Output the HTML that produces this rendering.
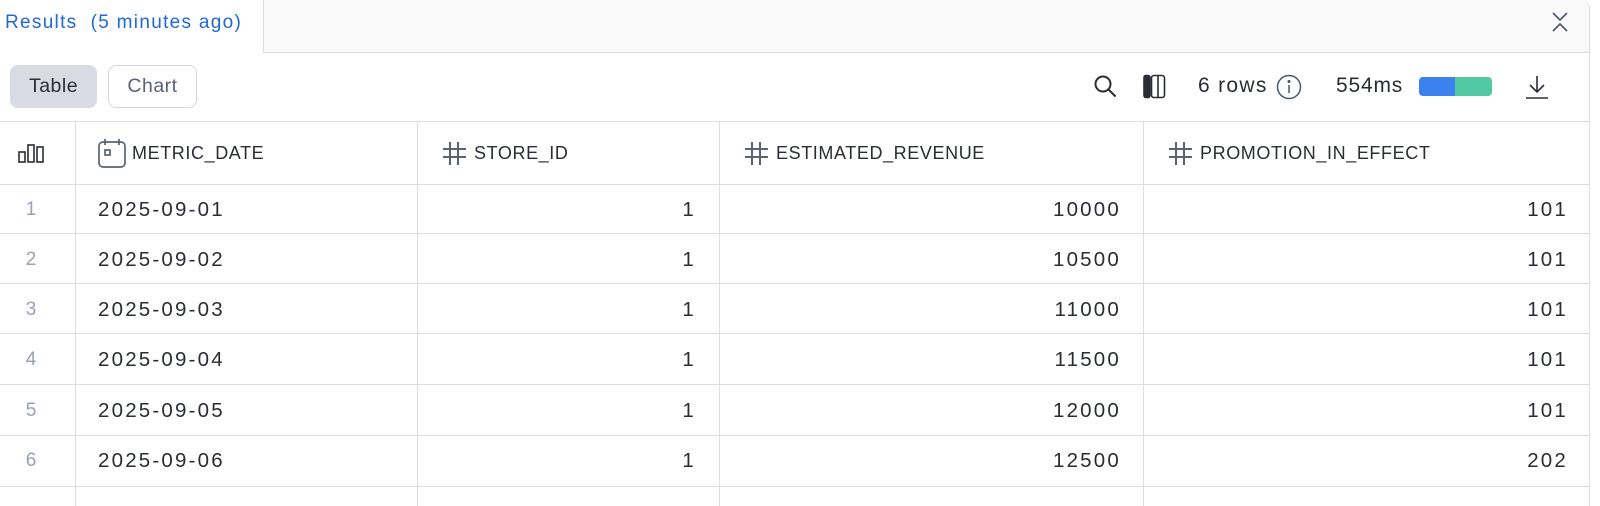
<!DOCTYPE html>
<html><head><meta charset="utf-8"><style>
*{box-sizing:border-box;margin:0;padding:0}
body{width:1600px;height:506px;overflow:hidden;background:#fff;font-family:"Liberation Sans",sans-serif;color:#2a2d34;position:relative}
.abs{position:absolute}
.topbar{left:263px;top:0;width:1327px;height:53px;background:#f9f9fa;border-left:1px solid #dcdde6;border-bottom:1px solid #dcdde6;border-right:1px solid #dcdde6;border-top-right-radius:8px}
.tab{left:5px;top:12px;font-size:19px;letter-spacing:1.3px;color:#1f68d6;white-space:pre}
.btn{top:65px;height:43px;border-radius:8px;font-size:19.5px;letter-spacing:0.5px;display:flex;align-items:center;justify-content:center}
.vl{width:1px;background:#dcdde6;top:122px;height:384px}
.hl{height:1px;background:#dcdde6;left:0;width:1590px}
.hd{top:143px;font-size:18px;letter-spacing:0.6px;color:#2a2d34}
.c{font-size:20.5px;letter-spacing:2.2px;position:absolute}
.n{color:#9aa0b4;font-size:19px;position:absolute;width:62px;text-align:center}
.r{text-align:right}
</style></head><body>
<div class="abs topbar"></div>
<div class="abs tab">Results  (5 minutes ago)</div>
<svg class="abs" style="left:1550px;top:11px" width="20" height="22" viewBox="0 0 20 22" fill="none" stroke="#4b5568" stroke-width="1.6"><path d="M3 2l7 7 7-7M3 20l7-7 7 7"/></svg>

<div class="abs btn" style="left:10px;width:87px;background:#d8dbe4;color:#2a2d34">Table</div>
<div class="abs btn" style="left:108px;width:89px;border:1px solid #d4d7e0;color:#5a6275">Chart</div>

<svg class="abs" style="left:1093px;top:74px" width="26" height="26" viewBox="0 0 26 26" fill="none" stroke="#2a2d34" stroke-width="2"><circle cx="10" cy="10" r="7.5"/><path d="M15.5 15.5l7 7"/></svg>
<svg class="abs" style="left:1143px;top:74px" width="24" height="26" viewBox="0 0 24 26" fill="none" stroke="#2a2d34" stroke-width="1.6"><rect x="1" y="1.5" width="6" height="22" rx="2" fill="#2a2d34"/><rect x="8.5" y="1.5" width="13" height="22" rx="2.5"/><path d="M15 1.5v22"/></svg>
<div class="abs" style="left:1198px;top:74px;font-size:21px;letter-spacing:1.3px">6 rows</div>
<svg class="abs" style="left:1276px;top:74px" width="26" height="26" viewBox="0 0 26 26" fill="none" stroke="#4b5568" stroke-width="1.5"><circle cx="13" cy="13" r="11.5"/><path d="M13 11v8"/><circle cx="13" cy="7.5" r="0.8" fill="#4b5568"/></svg>
<div class="abs" style="left:1336px;top:74px;font-size:21px;letter-spacing:0.8px">554ms</div>
<div class="abs" style="left:1419px;top:77px;width:36px;height:19px;background:#3b82ee;border-radius:4px 0 0 4px"></div>
<div class="abs" style="left:1455px;top:77px;width:37px;height:19px;background:#52c9a2;border-radius:0 4px 4px 0"></div>
<svg class="abs" style="left:1524px;top:73px" width="26" height="28" viewBox="0 0 26 28" fill="none" stroke="#2a2d34" stroke-width="1.6"><path d="M13 3v16M6 12l7 7 7-7M2 25h22"/></svg>

<div class="abs hl" style="top:121px"></div>
<div class="abs hl" style="top:184px"></div>
<div class="abs hl" style="top:233px"></div>
<div class="abs hl" style="top:283px"></div>
<div class="abs hl" style="top:333px"></div>
<div class="abs hl" style="top:384px"></div>
<div class="abs hl" style="top:435px"></div>
<div class="abs hl" style="top:486px"></div>
<div class="abs vl" style="left:75px"></div>
<div class="abs vl" style="left:417px"></div>
<div class="abs vl" style="left:719px"></div>
<div class="abs vl" style="left:1143px"></div>
<div class="abs vl" style="left:1589px;top:53px;height:453px"></div>

<svg class="abs" style="left:18px;top:143px" width="28" height="20" viewBox="0 0 28 20" fill="none" stroke="#2a2d34" stroke-width="1.6"><rect x="1" y="9" width="6" height="10"/><rect x="10" y="2" width="6" height="17"/><rect x="19" y="4" width="6" height="15"/></svg>
<svg class="abs" style="left:97px;top:138px" width="30" height="30" viewBox="0 0 30 30" fill="none" stroke="#5a6275" stroke-width="1.7"><rect x="2" y="4" width="26" height="25" rx="4"/><path d="M8 1v6M22 1v6"/><rect x="8" y="12" width="5" height="5"/></svg>
<div class="abs hd" style="left:132px">METRIC_DATE</div>
<svg class="abs" style="left:442px;top:141px" width="24" height="24" viewBox="0 0 24 24" fill="none" stroke="#5a6275" stroke-width="2"><path d="M8 1v23M16 1v23M1 8h23M1 16h23"/></svg>
<div class="abs hd" style="left:474px">STORE_ID</div>
<svg class="abs" style="left:744px;top:141px" width="24" height="24" viewBox="0 0 24 24" fill="none" stroke="#5a6275" stroke-width="2"><path d="M8 1v23M16 1v23M1 8h23M1 16h23"/></svg>
<div class="abs hd" style="left:776px">ESTIMATED_REVENUE</div>
<svg class="abs" style="left:1168px;top:141px" width="24" height="24" viewBox="0 0 24 24" fill="none" stroke="#5a6275" stroke-width="2"><path d="M8 1v23M16 1v23M1 8h23M1 16h23"/></svg>
<div class="abs hd" style="left:1200px">PROMOTION_IN_EFFECT</div>

<div class="n" style="left:0;top:199px">1</div><div class="c" style="left:98px;top:198px">2025-09-01</div><div class="c r" style="right:904px;top:198px">1</div><div class="c r" style="right:479px;top:198px">10000</div><div class="c r" style="right:32px;top:198px">101</div>
<div class="n" style="left:0;top:249px">2</div><div class="c" style="left:98px;top:248px">2025-09-02</div><div class="c r" style="right:904px;top:248px">1</div><div class="c r" style="right:479px;top:248px">10500</div><div class="c r" style="right:32px;top:248px">101</div>
<div class="n" style="left:0;top:299px">3</div><div class="c" style="left:98px;top:298px">2025-09-03</div><div class="c r" style="right:904px;top:298px">1</div><div class="c r" style="right:479px;top:298px">11000</div><div class="c r" style="right:32px;top:298px">101</div>
<div class="n" style="left:0;top:349px">4</div><div class="c" style="left:98px;top:348px">2025-09-04</div><div class="c r" style="right:904px;top:348px">1</div><div class="c r" style="right:479px;top:348px">11500</div><div class="c r" style="right:32px;top:348px">101</div>
<div class="n" style="left:0;top:400px">5</div><div class="c" style="left:98px;top:399px">2025-09-05</div><div class="c r" style="right:904px;top:399px">1</div><div class="c r" style="right:479px;top:399px">12000</div><div class="c r" style="right:32px;top:399px">101</div>
<div class="n" style="left:0;top:450px">6</div><div class="c" style="left:98px;top:449px">2025-09-06</div><div class="c r" style="right:904px;top:449px">1</div><div class="c r" style="right:479px;top:449px">12500</div><div class="c r" style="right:32px;top:449px">202</div>
</body></html>
